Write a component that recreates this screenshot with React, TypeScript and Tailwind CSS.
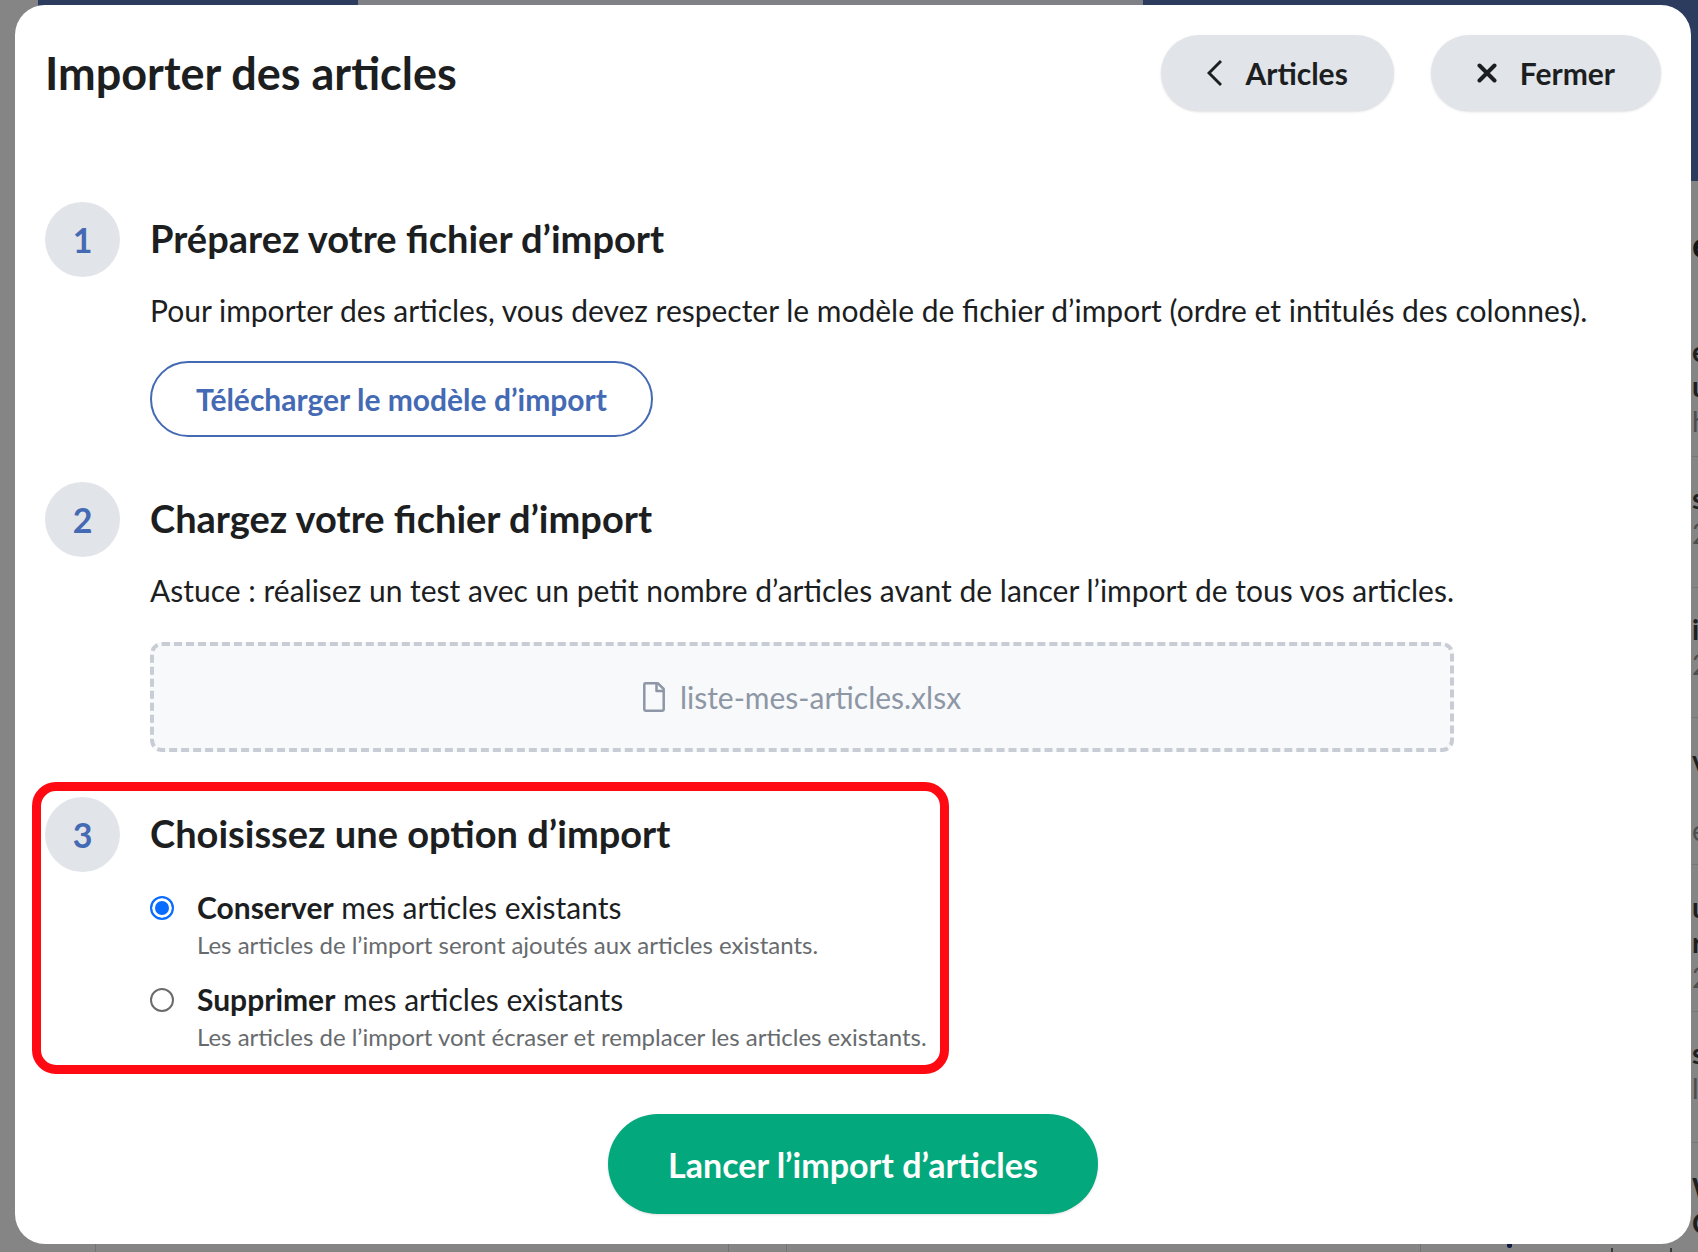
import React from "react";

function Step({ n, title, children }: { n: number; title: string; children: React.ReactNode }) {
  return (
    <section className="flex items-start gap-[30px]">
      <div className="flex size-[75px] shrink-0 items-center justify-center rounded-full bg-[#e1e4e9] text-[34px] font-bold text-[#446ab4]">
        {n}
      </div>
      <div className="flex min-w-0 flex-col items-start">
        <h2 className="mb-[16px] flex h-[73px] items-center text-[38px] font-bold whitespace-nowrap">{title}</h2>
        {children}
      </div>
    </section>
  );
}

function Option({ id, strong, hint, checked }: { id: string; strong: string; hint: string; checked?: boolean }) {
  return (
    <div className="flex gap-[23px]">
      <input
        id={id}
        type="radio"
        name="import-option"
        defaultChecked={checked}
        className="mt-[10px] size-6 shrink-0 appearance-none rounded-full border-2 border-[#6b6b6b] bg-white checked:border-[#0a6cff] checked:bg-[#0a6cff] checked:shadow-[inset_0_0_0_3px_white]"
      />
      <label htmlFor={id} className="whitespace-nowrap">
        <span className="block text-[30px] leading-[42px]">
          <b className="font-bold">{strong}</b> mes articles existants
        </span>
        <span className="block text-2xl leading-[34px] text-[#686b6e]">{hint}</span>
      </label>
    </div>
  );
}

const rows = [
  { id: "a", bold: ["e", "u"], sub: "h", size: "h-[137px] pb-1" },
  { id: "b", bold: ["s"], sub: "2", size: "h-[131px] pb-3" },
  { id: "c", bold: ["il"], sub: "2", size: "h-[130px] pb-3" },
  { id: "d", bold: ["v", "\u00a0"], sub: "e", size: "h-[147px] pt-2" },
  { id: "e", bold: ["ut", "r"], sub: "2", size: "h-[147px] pt-2" },
  { id: "f", bold: ["s"], sub: "l", size: "h-[131px] pb-3" },
  { id: "g", bold: ["W", "O"], sub: "", size: "h-[109px] pt-4" },
];

function Backdrop() {
  return (
    <div aria-hidden="true" className="absolute inset-0 flex flex-col overflow-hidden">
      <div className="flex h-[181px] shrink-0 pl-[38px]">
        <div className="w-[320px] bg-[#2c3c5e]" />
        <div className="flex-1 bg-[#808186]" />
        <div className="w-[555px] bg-[#2c3c5e]" />
      </div>
      <div className="flex min-h-0 flex-1 justify-between pl-[95px]">
        <div className="flex flex-1">
          <div className="w-[634px] border-x border-[#747474]" />
          <div className="ml-[57px] w-[635px] border-x border-[#747474]" />
          <div className="flex flex-1 items-end pl-[86px]">
            <div className="mb-1 h-1 w-[5px] rounded-b-full bg-[#0d1a44]" />
            <div className="ml-[99px] h-1 w-0.5 bg-[#3a3b3c]" />
            <div className="ml-[57px] h-1 w-0.5 bg-[#3a3b3c]" />
          </div>
        </div>
        <div className="w-[6px] overflow-hidden text-[28px] leading-[35px]">
          <div className="flex h-[139px] items-center pb-3 text-[36px] font-bold text-[#141516]">e</div>
          {rows.map((r) => (
            <div key={r.id} className={`flex flex-col justify-center border-b border-[#767676] last:border-b-0 ${r.size}`}>
              {r.bold.map((t, i) => (
                <span key={i} className="font-bold text-[#1d1e1f]">
                  {t}
                </span>
              ))}
              <span className="text-[#4c4d4e]">{r.sub}</span>
            </div>
          ))}
        </div>
      </div>
    </div>
  );
}

const pill =
  "flex h-[76px] items-center gap-[23px] rounded-full bg-[#e1e4e9] px-[46px] text-[30px] font-bold shadow-sm";

export default function App() {
  return (
    <div className="relative min-h-screen overflow-hidden bg-[#858585] pt-[5px] pr-[7px] pb-2 pl-[15px] font-['Lato',sans-serif] text-[#1c1e1f]">
      <Backdrop />
      <main className="relative flex flex-col rounded-[30px] bg-white p-[30px]">
        <header className="flex h-[76px] items-center justify-between">
          <h1 className="text-[45px] leading-[54px] font-bold">Importer des articles</h1>
          <div className="flex gap-[37px]">
            <button type="button" className={pill}>
              <svg viewBox="0 0 15 28" className="h-7 w-[15px]" fill="none" stroke="currentColor" strokeWidth="3">
                <path d="M14 2 2 14 14 26" />
              </svg>
              Articles
            </button>
            <button type="button" className={pill}>
              <svg
                viewBox="0 0 20 20"
                className="size-5"
                fill="none"
                stroke="currentColor"
                strokeWidth="4"
                strokeLinecap="round"
              >
                <path d="M2.500 2.500 17.500 17.500M17.500 2.500 2.500 17.500" />
              </svg>
              Fermer
            </button>
          </div>
        </header>

        <div className="mt-[91px] flex flex-col items-start gap-[45px]">
          <Step n={1} title="Préparez votre fichier d’import">
            <p className="text-[30px] leading-[38px] whitespace-nowrap">
              Pour importer des articles, vous devez respecter le modèle de fichier d’import (ordre et intitulés des
              colonnes).
            </p>
            <button
              type="button"
              className="mt-8 h-[76px] rounded-full border-2 border-[#446ab4] px-11 text-[30px] font-bold text-[#446ab4]"
            >
              Télécharger le modèle d’import
            </button>
          </Step>

          <Step n={2} title="Chargez votre fichier d’import">
            <div className="flex w-fit flex-col gap-[33px]">
              <p className="text-[30px] leading-[38px] whitespace-nowrap">
                Astuce : réalisez un test avec un petit nombre d’articles avant de lancer l’import de tous vos articles.
              </p>
              <button
                type="button"
                className="flex h-[110px] items-center justify-center gap-[15px] rounded-xl border-4 border-dashed border-[#c8ccd4] bg-[#f8f9fb] text-[30px] text-[#8d97a5]"
              >
                <svg
                  viewBox="0 0 22 30"
                  className="h-[30px] w-[22px]"
                  fill="none"
                  stroke="currentColor"
                  strokeWidth="2.500"
                  strokeLinejoin="round"
                >
                  <path d="M2.500 1.300H15L20.700 7V27.500Q20.700 28.700 19.500 28.700H2.500Q1.300 28.700 1.300 27.500V2.500Q1.300 1.300 2.500 1.300Z" />
                  <path d="M13.500 1.300V9H20.700" />
                </svg>
                liste-mes-articles.xlsx
              </button>
            </div>
          </Step>

          <div className="relative">
            <Step n={3} title="Choisissez une option d’import">
              <div className="flex flex-col gap-4">
                <Option
                  id="keep"
                  strong="Conserver"
                  hint="Les articles de l’import seront ajoutés aux articles existants."
                  checked
                />
                <Option
                  id="replace"
                  strong="Supprimer"
                  hint="Les articles de l’import vont écraser et remplacer les articles existants."
                />
              </div>
            </Step>
            <div className="pointer-events-none absolute -top-[15px] -right-[22px] -bottom-5 -left-[13px] rounded-3xl border-[9px] border-[#ff0a12]" />
          </div>
        </div>

        <button
          type="button"
          className="mt-[60px] h-[100px] self-center rounded-full bg-[#03a87c] px-[60px] text-[34px] font-bold text-white shadow-sm"
        >
          Lancer l’import d’articles
        </button>
      </main>
    </div>
  );
}
